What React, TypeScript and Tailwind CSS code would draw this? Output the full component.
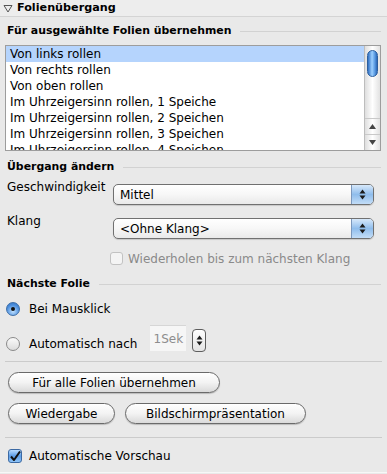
import type { ReactNode } from 'react';

const transitions = [
  'Von links rollen',
  'Von rechts rollen',
  'Von oben rollen',
  'Im Uhrzeigersinn rollen, 1 Speiche',
  'Im Uhrzeigersinn rollen, 2 Speichen',
  'Im Uhrzeigersinn rollen, 3 Speichen',
  'Im Uhrzeigersinn rollen, 4 Speichen',
];

function SectionTitle({ children, className }: { children: ReactNode; className: string }) {
  return (
    <div className={`flex items-center h-[16px] pl-[7px] pr-[6px] ${className}`}>
      <span className="font-bold text-[10.9px]">{children}</span>
      <div className="ml-[9px] flex-1 h-px bg-[#d2d2d2]" />
    </div>
  );
}

function UpDown() {
  // tiny stacked arrows used in popups and the stepper
  return (
    <svg width="7" height="11" viewBox="0 0 7 11">
      <polygon points="3.5,0.5 6.5,4.5 0.5,4.5" fill="#1b1b1b" />
      <polygon points="0.5,6.5 6.5,6.5 3.5,10.5" fill="#1b1b1b" />
    </svg>
  );
}

function Popup({ value }: { value: string }) {
  return (
    <div className="flex w-[261px] h-[21px] rounded-[5px] border border-[#707070] bg-gradient-to-b from-white via-[#f7f7f7] to-[#e9e9e9] shadow-[0_1px_1px_rgba(0,0,0,0.15)]">
      <div className="flex-1 flex items-center pl-[6px] text-black">{value}</div>
      <div className="w-[22px] flex items-center justify-center rounded-r-[4px] border-l border-[#7c98bd] bg-gradient-to-b from-[#d7e8fa] via-[#8fbdec] to-[#c3ddf7]">
        <UpDown />
      </div>
    </div>
  );
}

function Radio({ checked }: { checked: boolean }) {
  if (checked) {
    return (
      <div className="w-[14px] h-[14px] rounded-full border border-[#3c6ea8] bg-[radial-gradient(circle_at_50%_70%,#bfe0ff,#4d90de_60%,#2f6fbf)] flex items-center justify-center">
        <div className="w-[4px] h-[4px] rounded-full bg-[#111]" />
      </div>
    );
  }
  return (
    <div className="w-[14px] h-[14px] rounded-full border border-[#8a8a8a] bg-gradient-to-b from-[#fafafa] to-[#dcdcdc]" />
  );
}

function PillButton({ children, className }: { children: ReactNode; className: string }) {
  return (
    <div
      className={`h-[21px] flex items-center justify-center rounded-full border border-[#6a6a6a] bg-gradient-to-b from-white via-[#f3f3f3] to-[#dadada] shadow-[0_1px_1px_rgba(0,0,0,0.2)] ${className}`}
    >
      {children}
    </div>
  );
}

function Scrollbar() {
  return (
    <div className="w-[16px] h-full flex flex-col border-l border-[#bdbdbd] bg-gradient-to-r from-[#dedede] via-white to-[#e2e2e2]">
      <div className="flex-1 pt-[4px] px-[2px]">
        <div className="h-[27px] rounded-full border border-[#2c5f9e] bg-[linear-gradient(to_right,#2f6fc2,#9dd0ff_45%,#5a9be3_75%,#2c67b6)]" />
      </div>
      <div className="h-[16px] flex items-center justify-center border-t border-[#c9c9c9]">
        <svg width="7" height="5" viewBox="0 0 7 5">
          <polygon points="3.5,0 7,5 0,5" fill="#444" />
        </svg>
      </div>
      <div className="h-[16px] flex items-center justify-center border-t border-[#c9c9c9]">
        <svg width="7" height="5" viewBox="0 0 7 5">
          <polygon points="0,0 7,0 3.5,5" fill="#444" />
        </svg>
      </div>
    </div>
  );
}

export default function App() {
  return (
    <div className="w-[387px] h-[474px] overflow-hidden bg-[#e9e9e9] text-black text-[12px] leading-[14px] font-['DejaVu_Sans',sans-serif]">
      {/* panel header */}
      <div className="h-[17px] flex items-center pl-[3px] border-b border-[#d4d4d4] bg-[#ededed]">
        <svg width="10" height="9" viewBox="0 0 10 9" className="mr-[4px]">
          <polygon points="1,1.5 9,1.5 5,8" fill="none" stroke="#555" strokeWidth="1" />
        </svg>
        <span className="font-bold text-[11.2px]">Folienübergang</span>
      </div>

      <SectionTitle className="mt-[6px]">Für ausgewählte Folien übernehmen</SectionTitle>

      {/* transitions list */}
      <div className="mt-[6px] ml-[5px] w-[376px] h-[106px] flex border border-[#9d9d9d] bg-white overflow-hidden">
        <div className="flex-1 overflow-hidden">
          {transitions.map((t, i) => (
            <div
              key={t}
              className={`h-[16px] flex items-center pl-[4px] whitespace-nowrap ${i === 0 ? 'bg-[#b5d4fd]' : ''}`}
            >
              {t}
            </div>
          ))}
        </div>
        <Scrollbar />
      </div>

      <SectionTitle className="mt-[8px]">Übergang ändern</SectionTitle>

      <div className="mt-[9px] flex items-start pl-[7px]">
        <div className="w-[106px] -mt-[4px]">Geschwindigkeit</div>
        <Popup value="Mittel" />
      </div>
      <div className="mt-[13px] flex items-start pl-[7px]">
        <div className="w-[106px] -mt-[4px]">Klang</div>
        <Popup value="<Ohne Klang>" />
      </div>

      <div className="mt-[13px] flex items-center pl-[110px] h-[13px]">
        <div className="w-[13px] h-[13px] rounded-[3px] border border-[#c2c2c2] bg-[#f4f4f4]" />
        <span className="ml-[5px] text-[#8a8a8a]">Wiederholen bis zum nächsten Klang</span>
      </div>

      <SectionTitle className="mt-[11px]">Nächste Folie</SectionTitle>

      <div className="mt-[9px] h-[16px] flex items-center pl-[6px]">
        <Radio checked />
        <span className="ml-[9px]">Bei Mausklick</span>
      </div>

      <div className="mt-[8px] h-[30px] flex items-center pl-[6px]">
        <div className="flex items-center self-end h-[22px]">
          <Radio checked={false} />
          <span className="ml-[9px]">Automatisch nach</span>
        </div>
        <div className="ml-[13px] w-[36px] h-[26px] flex items-center justify-center border-t border-[#d6d6d6] bg-[#f6f6f6] text-[#8d8d8d] self-start">
          1Sek
        </div>
        <div className="ml-[6px] w-[14px] h-[23px] flex items-center justify-center rounded-[4px] border border-[#5e5e5e] bg-gradient-to-b from-white to-[#e4e4e4]">
          <UpDown />
        </div>
      </div>

      <div className="mt-[6px] mx-[5px] h-px bg-[#cbcbcb]" />

      <div className="mt-[10px] pl-[8px]">
        <PillButton className="w-[212px]">Für alle Folien übernehmen</PillButton>
      </div>
      <div className="mt-[10px] pl-[8px] flex gap-[10px]">
        <PillButton className="w-[107px]">Wiedergabe</PillButton>
        <PillButton className="w-[181px]">Bildschirmpräsentation</PillButton>
      </div>

      <div className="mt-[13px] mx-[5px] h-px bg-[#cbcbcb]" />

      <div className="mt-[10px] h-[16px] flex items-center pl-[8px]">
        <div className="w-[14px] h-[14px] rounded-[3px] border border-[#3b69a3] bg-gradient-to-b from-[#b9dcff] via-[#5c9de6] to-[#8ec3f7] flex items-center justify-center">
          <svg width="12" height="11" viewBox="0 0 12 11">
            <path d="M2 5.5 L5 9 L11 0.5" fill="none" stroke="#111" strokeWidth="2" strokeLinejoin="round" />
          </svg>
        </div>
        <span className="ml-[7px]">Automatische Vorschau</span>
      </div>
      <div className="mt-[8px] h-px bg-[#f7f7f7]" />
    </div>
  );
}
